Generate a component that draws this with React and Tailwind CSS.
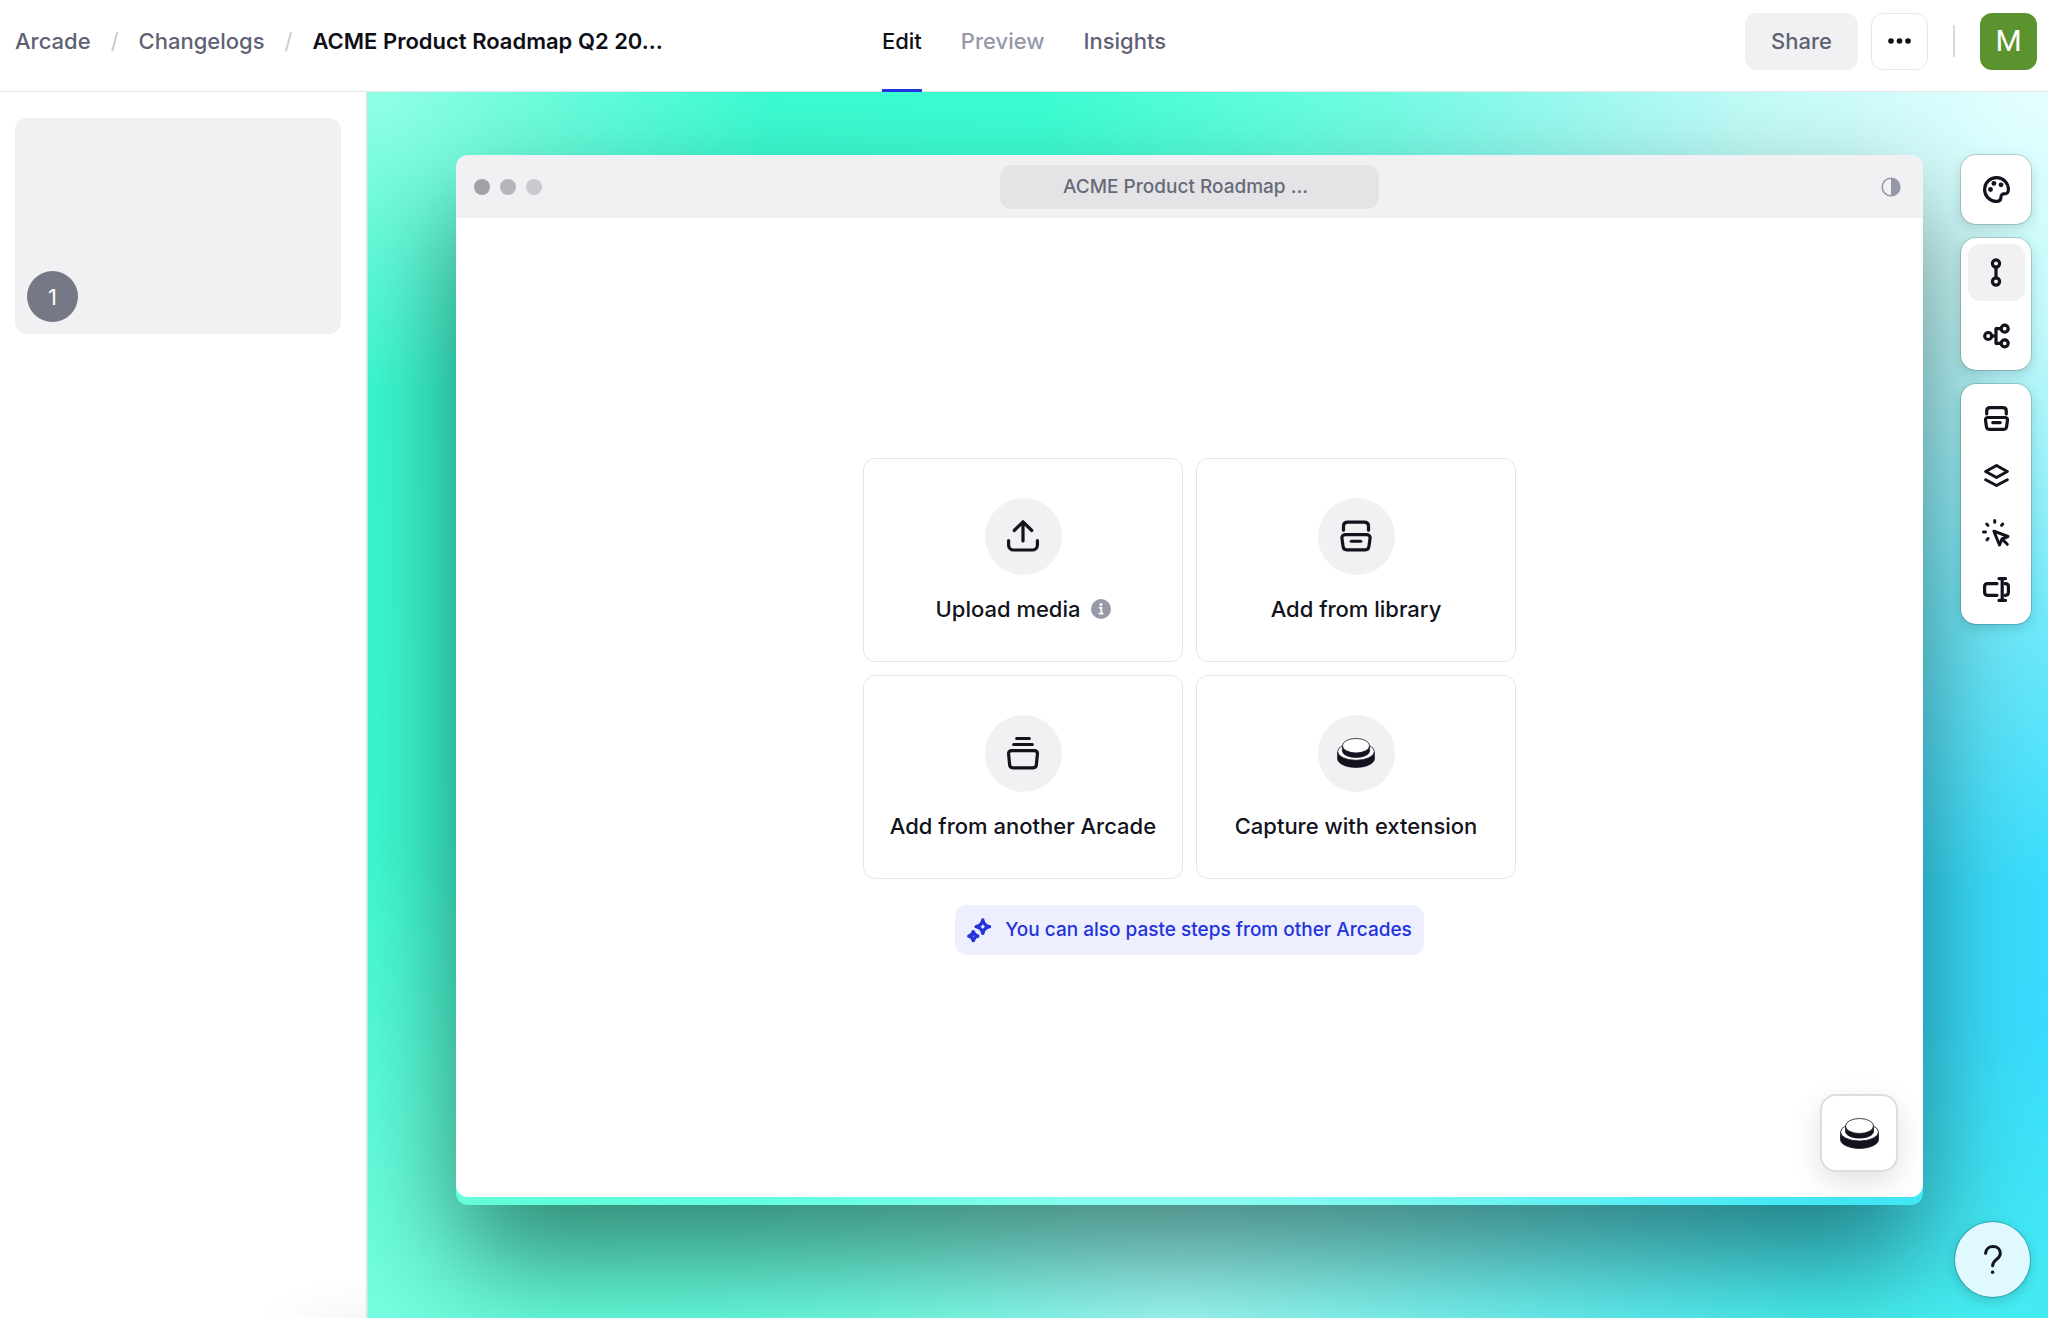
import clsx from "clsx";

const iconProps = {
  fill: "none",
  stroke: "currentColor",
  strokeLinecap: "round",
  strokeLinejoin: "round",
  "aria-hidden": true,
};

function PaletteIcon() {
  return (
    <svg {...iconProps} strokeWidth="3.2" viewBox="0 0 27 27" className="size-[27px]">
      <path d="M25.4 13.5A11.9 11.9 0 1 0 13 25.4c2.8.2 4.6-.8 4.8-3.2.2-2.6.4-4.3 3.2-4.3 3 .2 4.4-1.3 4.4-4.4z" />
      <g fill="currentColor" stroke="none">
        <circle cx="7.5" cy="13.5" r="2.4" />
        <circle cx="10.9" cy="7.4" r="2.4" />
        <circle cx="18" cy="8.8" r="2.4" />
      </g>
    </svg>
  );
}

function LinearIcon() {
  return (
    <svg {...iconProps} strokeWidth="3.2" viewBox="0 0 12 29" className="h-[29px] w-3">
      <circle cx="6" cy="5.5" r="3.6" />
      <circle cx="6" cy="23.5" r="3.6" />
      <path d="M6 9.2V19.8" />
    </svg>
  );
}

function BranchIcon() {
  return (
    <svg {...iconProps} strokeWidth="3.2" viewBox="0 0 27 26" className="h-[26px] w-[27px]">
      <circle cx="5.2" cy="13" r="3.5" />
      <circle cx="21.7" cy="5.7" r="3.5" />
      <circle cx="21.7" cy="20.3" r="3.5" />
      <path d="M8.8 13H13M17.5 5.7H13v14.6h4.5" />
    </svg>
  );
}

function LibraryIcon({ strokeWidth = 3.2, className = "size-[25px]" }) {
  return (
    <svg {...iconProps} strokeWidth={strokeWidth} viewBox="0 0 25 25" className={className}>
      <path d="M2.7 8V5c0-2.2 1.2-3.4 3.5-3.4h12.6c2.3 0 3.5 1.2 3.5 3.4v3" />
      <path d="M4.1 11.5h16.8c1.9 0 2.8 1.2 2.6 2.8l-.9 6.3c-.2 1.7-1.2 2.7-2.8 2.7H5.2c-1.6 0-2.6-1-2.8-2.7l-.9-6.3c-.2-1.6.7-2.8 2.6-2.8z" />
      <path d="M8.8 16.6h7.4" />
    </svg>
  );
}

function LayersIcon() {
  return (
    <svg {...iconProps} strokeWidth="3" viewBox="0 0 25 23" className="h-[23px] w-[25px]">
      <path d="M12.5 1.5 23.3 7.5 12.5 13.5 1.7 7.5z" />
      <path d="M1.7 15.7 12.5 21.5 23.3 15.7" />
    </svg>
  );
}

function ClickIcon() {
  return (
    <svg {...iconProps} strokeWidth="3" viewBox="0 0 28 28" className="size-7">
      <path d="M12.7 1.5v1.7M4.7 5l1.2 1.3M1.5 13h2M6.1 19.5 5 20.8M20.8 5l-1.2 1.3" />
      <path d="M11.9 12.2 26 17.5 20 20 17.5 26z" />
      <path d="m21 21 4.3 4.3" />
    </svg>
  );
}

function FieldIcon() {
  return (
    <svg {...iconProps} strokeWidth="3.2" viewBox="0 0 27 25" className="h-[25px] w-[27px]">
      <path d="M14 6.7H4.6c-2 0-3 1-3 3v5.6c0 2 1 3 3 3H14" />
      <path d="M19.2 1.6v21.8M16 1.6h6.5M16 23.4h6.5" />
      <path d="M22 6.7h.4c2 0 3 1 3 3v5.6c0 2-1 3-3 3H22" />
    </svg>
  );
}

function UploadIcon() {
  return (
    <svg {...iconProps} strokeWidth="3.2" viewBox="0 0 32 32" className="size-8">
      <path d="M16 21V2M7.2 10.5 16 1.8l8.8 8.7" />
      <path d="M1.6 20.5V25a5 5 0 0 0 5 5h18.8a5 5 0 0 0 5-5v-4.5" />
    </svg>
  );
}

function StackIcon() {
  return (
    <svg {...iconProps} strokeWidth="3.2" viewBox="0 0 32 34" className="h-[34px] w-8">
      <path d="M9.7 2.5h12.6M6.7 8.5h18.6" />
      <path d="M4.6 14.7h22.8c2.1 0 3.2 1.2 3 3.2l-1 10.8c-.2 2.2-1.3 3.2-3.3 3.2H5.9c-2 0-3.1-1-3.3-3.2l-1-10.8c-.2-2 .9-3.2 3-3.2z" />
    </svg>
  );
}

function PuckIcon({ className }) {
  return (
    <svg viewBox="0 0 39 31" className={className} aria-hidden="true">
      <g stroke="#12131f" strokeWidth="0.8">
        <path d="M.5 14.5v7c0 4.900 8.500 8.900 19 8.900s19-4 19-8.900v-7z" fill="#12131f" />
        <ellipse cx="19.5" cy="14" rx="19" ry="9" fill="#fff" />
        <path d="M5.5 8v5.4c0 3.7 6.3 6.7 14 6.7s14-3 14-6.7V8z" fill="#12131f" />
        <ellipse cx="19.5" cy="8" rx="14" ry="7.5" fill="#fff" />
      </g>
    </svg>
  );
}

function SparklesIcon() {
  return (
    <svg {...iconProps} strokeWidth="3.4" viewBox="0 0 25 25" className="size-[25px]">
      <path d="M15.8 2c.8 4.2 2.5 5.9 6.7 6.7-4.2.8-5.9 2.5-6.7 6.7-.8-4.2-2.5-5.9-6.7-6.7 4.2-.8 5.9-2.5 6.7-6.7z" />
      <path d="M6.3 13.6c.6 2.9 1.6 3.9 4.5 4.5-2.9.6-3.9 1.6-4.5 4.5-.6-2.9-1.6-3.9-4.5-4.5 2.9-.6 3.9-1.6 4.5-4.5z" />
    </svg>
  );
}

function InfoIcon() {
  return (
    <svg viewBox="0 0 20 20" className="size-5 text-[#9699a8]" aria-hidden="true">
      <circle cx="10" cy="10" r="10" fill="currentColor" />
      <circle cx="10" cy="5.5" r="1.5" fill="#fff" />
      <path d="M8 8.9h2.3v5.6M7.7 14.7h4.8" fill="none" stroke="#fff" strokeWidth="1.8" />
    </svg>
  );
}

function ContrastIcon() {
  return (
    <svg viewBox="0 0 20 20" className="size-5" aria-hidden="true">
      <circle cx="10" cy="10" r="8.8" fill="none" stroke="currentColor" strokeWidth="1.6" />
      <path d="M10 1.2a8.8 8.8 0 0 1 0 17.6z" fill="currentColor" />
    </svg>
  );
}

const tabs = [
  { label: "Edit", className: "text-[#0e0f16]", active: true },
  { label: "Preview", className: "text-[#9598a8]" },
  { label: "Insights", className: "text-[#5f6273]" },
];

const sources = [
  { label: "Upload media", icon: <UploadIcon />, info: true },
  {
    label: "Add from library",
    icon: <LibraryIcon strokeWidth={2.5} className="size-8" />,
  },
  { label: "Add from another Arcade", icon: <StackIcon /> },
  {
    label: "Capture with extension",
    icon: <PuckIcon className="h-[30px] w-[38px]" />,
  },
];

const toolGroups = [
  { id: "theme", tools: [{ label: "Theme", icon: <PaletteIcon /> }] },
  {
    id: "flow",
    tools: [
      { label: "Linear", icon: <LinearIcon />, active: true },
      { label: "Branching", icon: <BranchIcon /> },
    ],
  },
  {
    id: "insert",
    tools: [
      { label: "Library", icon: <LibraryIcon /> },
      { label: "Layers", icon: <LayersIcon /> },
      { label: "Hotspots", icon: <ClickIcon /> },
      { label: "Fields", icon: <FieldIcon /> },
    ],
  },
];

function Header() {
  return (
    <header className="grid grid-cols-[1fr_auto_1fr] border-b border-[#e4e5e9] bg-white text-[22px] leading-7 font-medium">
      <nav aria-label="Breadcrumb" className="flex h-[82px] items-center gap-5 pl-[15px]">
        <a href="#" className="text-[#5f6273]">
          Arcade
        </a>
        <span className="font-normal text-[#c9cad1]">/</span>
        <a href="#" className="text-[#5f6273]">
          Changelogs
        </a>
        <span className="font-normal text-[#c9cad1]">/</span>
        <h1 className="font-semibold whitespace-nowrap text-[#0e0f16]">
          ACME Product Roadmap Q2 20…
        </h1>
      </nav>

      <nav aria-label="Views" className="flex gap-[39px]">
        {tabs.map((tab) => (
          <a
            key={tab.label}
            href="#"
            className={clsx(
              "-mb-px border-b-[3px] pt-[27px] pb-[34px]",
              tab.active ? "border-[#2233e0]" : "border-transparent",
              tab.className
            )}
          >
            {tab.label}
          </a>
        ))}
      </nav>

      <div className="flex h-[82px] items-center justify-end pr-[11px]">
        <button
          type="button"
          className="h-[57px] rounded-xl bg-[#f1f1f4] px-[26px] text-[#5f6273]"
        >
          Share
        </button>
        <button
          type="button"
          aria-label="More"
          className="ml-[13px] flex size-[57px] items-center justify-center rounded-xl border border-[#e8e8ec] text-[#0e0f16]"
        >
          <svg viewBox="0 0 23 6" fill="currentColor" className="h-[6px] w-[23px]">
            <circle cx="3" cy="3" r="2.8" />
            <circle cx="11.5" cy="3" r="2.8" />
            <circle cx="20" cy="3" r="2.8" />
          </svg>
        </button>
        <div className="mx-[25px] h-8 w-[2px] bg-[#d8d9de]" />
        <button
          type="button"
          aria-label="Account"
          className="size-[57px] rounded-xl bg-[#5b942e] font-[Roboto] text-[30px] font-normal text-white"
        >
          M
        </button>
      </div>
    </header>
  );
}

function Steps() {
  return (
    <aside className="w-[366px] shrink-0 bg-white bg-[radial-gradient(110px_40px_at_100%_100%,rgba(0,0,0,0.03),transparent)] pt-[26px] pr-[25px] pl-[15px]">
      <button
        type="button"
        className="flex h-[216px] w-full items-end rounded-xl bg-[#f1f1f4] p-3"
      >
        <span className="flex size-[51px] items-center justify-center rounded-full bg-[#767885] text-[22px] leading-7 text-white">
          1
        </span>
      </button>
    </aside>
  );
}

function SourceCard({ source }) {
  return (
    <button
      type="button"
      className="flex h-[204px] flex-col items-center justify-center gap-5 rounded-xl border border-[#e6e6ea]"
    >
      <span className="flex size-[77px] items-center justify-center rounded-full bg-[#f1f1f4]">
        {source.icon}
      </span>
      <span className="flex items-center gap-[10px] text-[22px] leading-7 font-medium">
        {source.label}
        {source.info ? <InfoIcon /> : null}
      </span>
    </button>
  );
}

function BrowserFrame() {
  return (
    <section className="flex min-w-0 flex-1 flex-col rounded-xl pb-2 shadow-[0_54px_110px_rgba(0,0,0,0.47)]">
      <div className="grid h-[63px] grid-cols-[1fr_379px_1fr] items-center rounded-t-xl bg-[#f1f1f4] px-[18px]">
        <div className="flex gap-[10px]">
          <span className="size-4 rounded-full bg-[#a0a2a7]" />
          <span className="size-4 rounded-full bg-[#b5b6ba]" />
          <span className="size-4 rounded-full bg-[#c9cacd]" />
        </div>
        <div className="rounded-xl bg-[#e4e4e7] py-2 pr-2 text-center text-[19px] leading-7 font-medium text-[#676a79]">
          ACME Product Roadmap …
        </div>
        <button
          type="button"
          aria-label="Toggle frame theme"
          className="justify-self-end pr-1 text-[#9497a6]"
        >
          <ContrastIcon />
        </button>
      </div>

      <div className="relative flex flex-1 flex-col items-center justify-center rounded-b-xl bg-white pb-0.5">
        <div className="grid grid-cols-[320px_320px] gap-[13px]">
          {sources.map((source) => (
            <SourceCard key={source.label} source={source} />
          ))}
        </div>
        <p className="mt-[26px] flex h-[50px] items-center gap-[13px] rounded-xl bg-[#eeeffe] px-3 text-[19px] leading-7 font-medium text-[#2233dd]">
          <SparklesIcon />
          You can also paste steps from other Arcades
        </p>

        <button
          type="button"
          aria-label="Record"
          className="absolute right-[25px] bottom-[25px] flex size-[78px] items-center justify-center rounded-2xl border-2 border-[#dddde1] bg-white shadow-[0_10px_30px_rgba(0,0,0,0.12)]"
        >
          <PuckIcon className="h-[31px] w-[39px]" />
        </button>
      </div>
    </section>
  );
}

function Toolbar() {
  return (
    <div className="flex w-[72px] shrink-0 flex-col gap-3">
      {toolGroups.map((group) => (
        <div
          key={group.id}
          className="flex flex-col items-center rounded-2xl border border-black/15 bg-white bg-clip-padding p-[6px] shadow-[0_4px_12px_rgba(0,0,0,0.12)]"
        >
          {group.tools.map((tool, index) => (
            <button
              key={tool.label}
              type="button"
              aria-label={tool.label}
              className={clsx(
                "flex size-[57px] items-center justify-center rounded-xl",
                tool.active && "bg-[#f1f1f4]",
                group.id === "flow" && index > 0 && "mt-[6px]"
              )}
            >
              {tool.icon}
            </button>
          ))}
        </div>
      ))}
    </div>
  );
}

function HelpButton() {
  return (
    <button
      type="button"
      aria-label="Help"
      className="absolute right-[17px] bottom-5 flex size-[77px] items-center justify-center rounded-full border border-black/20 bg-[#dff9ff] bg-clip-padding shadow-[0_4px_12px_rgba(0,0,0,0.15)]"
    >
      <svg {...iconProps} strokeWidth="3" viewBox="0 0 18 30" className="h-[30px] w-[18px]">
        <path d="M1.6 8.3C2 4.2 5 1.6 9 1.6c4.2 0 7.3 2.7 7.3 6.8 0 5.9-7.7 6.1-7.7 12.3" />
        <circle cx="8.6" cy="27.3" r="1.7" fill="currentColor" stroke="none" />
      </svg>
    </button>
  );
}

export default function App() {
  return (
    <div className="flex min-h-screen flex-col bg-white font-[Inter,sans-serif] text-[#12131c]">
      <Header />
      <div className="flex flex-1">
        <Steps />
        <main className="relative flex flex-1 items-start gap-[37px] overflow-hidden border-l-2 border-[#c2eee4] bg-[radial-gradient(60%_65%_at_100%_0%,#e6ffff_0%,rgba(215,253,250,0.85)_30%,rgba(200,251,246,0.4)_65%,rgba(180,250,240,0)_100%),radial-gradient(24%_24%_at_0%_0%,rgba(155,255,232,0.9),rgba(130,255,225,0)),radial-gradient(35%_40%_at_0%_100%,rgba(125,255,226,0.9),rgba(120,255,225,0)),radial-gradient(38%_45%_at_48%_100%,rgba(175,255,250,0.85),rgba(150,255,245,0)),radial-gradient(40%_30%_at_88%_105%,rgba(75,245,235,0.9),rgba(70,240,240,0)),linear-gradient(108deg,#3bf8cf_0%,#3cffd3_45%,#40eee8_68%,#3adffa_82%,#38daff_100%)] pt-[62px] pr-4 pl-[88px]">
          <div className="flex min-w-0 flex-1 self-stretch pt-px pb-[113px]">
            <BrowserFrame />
          </div>
          <Toolbar />
          <HelpButton />
        </main>
      </div>
    </div>
  );
}
